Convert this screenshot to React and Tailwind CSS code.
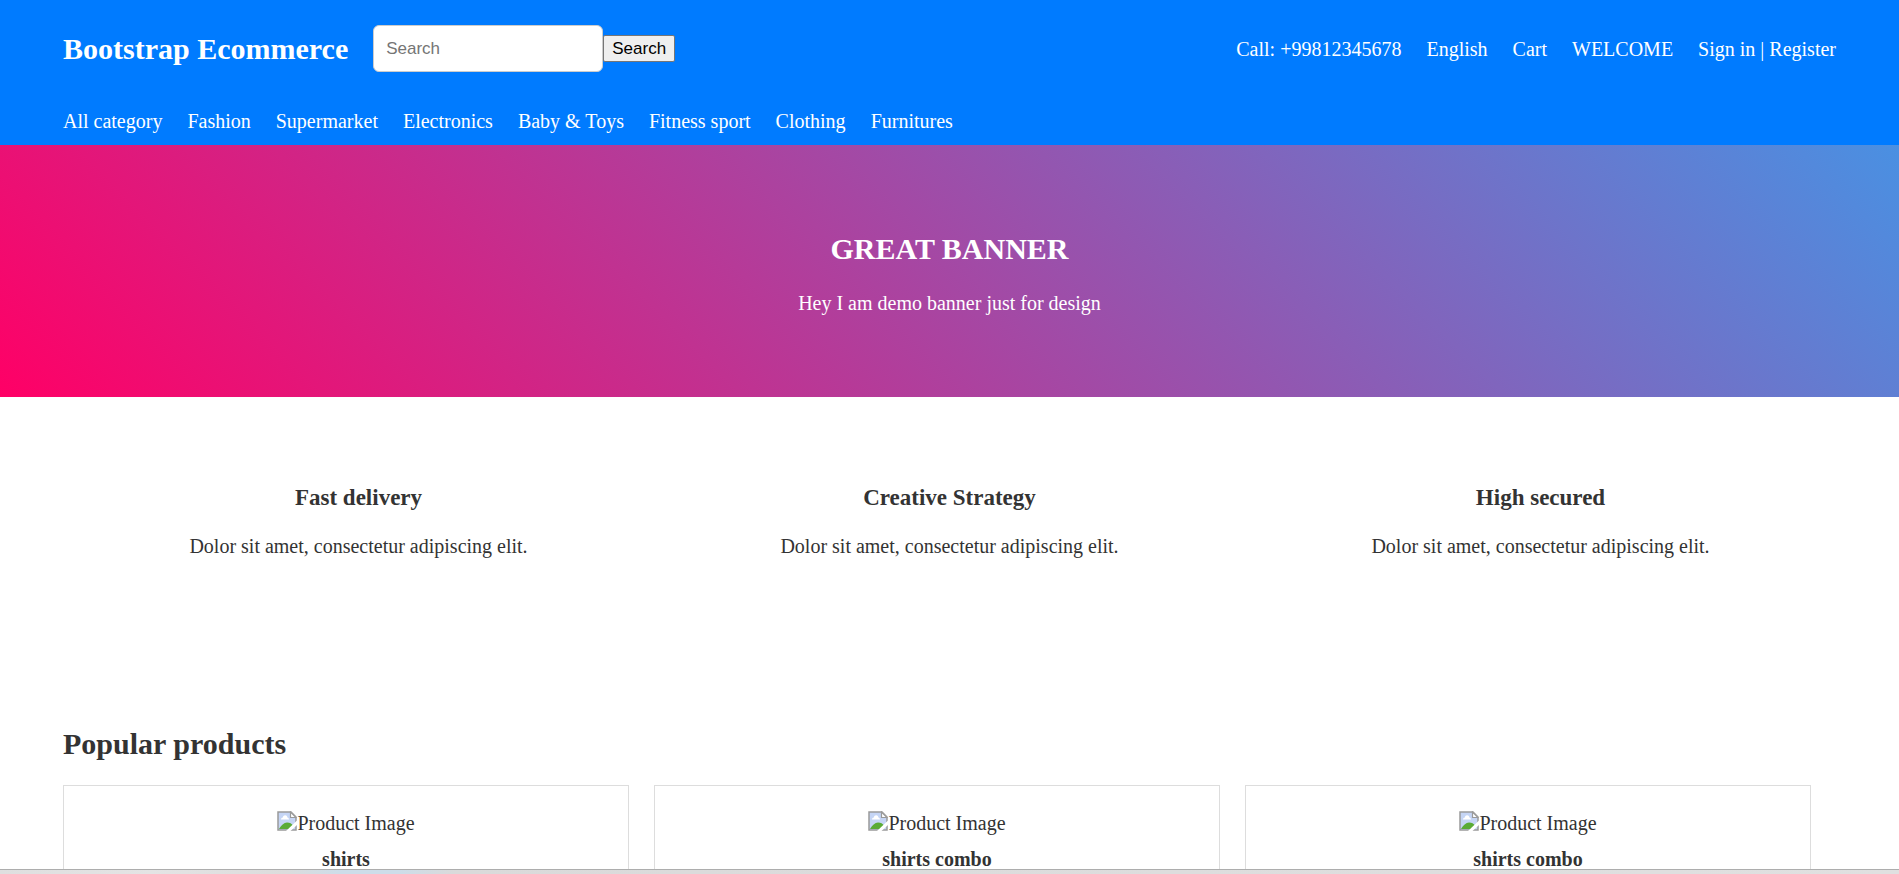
const utilityLinks = ["Call: +99812345678", "English", "Cart", "WELCOME", "Sign in | Register"];

const categories = [
  "All category",
  "Fashion",
  "Supermarket",
  "Electronics",
  "Baby & Toys",
  "Fitness sport",
  "Clothing",
  "Furnitures",
];

const features = ["Fast delivery", "Creative Strategy", "High secured"];

const products = ["shirts", "shirts combo", "shirts combo"];

function ImagePlaceholder() {
  return (
    <svg width="20" height="20" viewBox="0 0 20 20" className="shrink-0" aria-hidden="true">
      <path d="M1 1h13l5 5v13H1z" fill="#c5d5f5" />
      <path d="M4 8.500c0-1.300.9-2 1.800-2 .3-1.400 1.200-2.200 2.300-2.200 1.200 0 2.100.9 2.300 2.100.9.1 1.600.9 1.600 2.100z" fill="#fff" />
      <path d="M2 18c2-3.500 5-6.500 8-6.500s4.500 1 6 3L13 18z" fill="#5aab36" />
      <path d="M1 1h13l5 5v13H1z" fill="none" stroke="#9a9a9a" strokeWidth="1.500" />
      <path d="M13.500 1v5.500H19z" fill="#fff" stroke="#9a9a9a" strokeWidth="1.200" />
      <path d="M20 9.500v4.500L13.500 20H9z" fill="#fff" />
    </svg>
  );
}

export default function App() {
  return (
    <div className="flex h-screen flex-col overflow-hidden bg-white font-['Liberation_Serif',serif] text-xl leading-6 text-[#333]">
      <div className="min-h-0 flex-1 overflow-hidden">
        <header className="bg-[#007bff] text-white">
          <div className="flex items-center justify-between px-[63px] py-[25px]">
            <div className="flex items-center gap-[25px]">
              <a href="#" className="text-[30px] leading-[34px] font-bold">Bootstrap Ecommerce</a>
              <form className="flex items-center font-['Liberation_Sans',sans-serif] text-[17px] leading-5" onSubmit={(e) => e.preventDefault()}>
                <input
                  type="search"
                  aria-label="Search"
                  placeholder="Search"
                  className="h-[47px] w-[230px] rounded-md border border-[#ccc] bg-white px-3 text-black placeholder:text-[#757575]"
                />
                <button type="submit" className="h-[27px] w-[72px] rounded-xs border border-[#767676] bg-[#efefef] text-black">
                  Search
                </button>
              </form>
            </div>
            <nav className="flex gap-[25px]" aria-label="Account">
              {utilityLinks.map((label) => (
                <a key={label} href="#">{label}</a>
              ))}
            </nav>
          </div>
          <nav className="flex gap-[25px] px-[63px] py-3" aria-label="Categories">
            {categories.map((label) => (
              <a key={label} href="#">{label}</a>
            ))}
          </nav>
        </header>

        <section className="bg-[linear-gradient(45deg,#ff0066,#4a90e2)] px-[63px] pt-[86px] pb-[82px] text-center text-white">
          <h1 className="text-[30px] leading-[35px] font-bold">GREAT BANNER</h1>
          <p className="mt-[25px]">Hey I am demo banner just for design</p>
        </section>

        <main>
          <section className="grid grid-cols-3 px-[63px] pt-[88px] pb-[168px] text-center">
            {features.map((title) => (
              <article key={title}>
                <h2 className="text-[23px] leading-[26px] font-bold">{title}</h2>
                <p className="mt-[23px]">Dolor sit amet, consectetur adipiscing elit.</p>
              </article>
            ))}
          </section>

          <section className="pr-[88px] pl-[63px]">
            <h2 className="text-[30px] leading-[35px] font-bold">Popular products</h2>
            <div className="mt-6 grid grid-cols-3 gap-[25px]">
              {products.map((name, i) => (
                <article key={i} className="flex flex-col items-center border border-[#ddd] p-[25px] text-center">
                  <div className="flex items-start">
                    <ImagePlaceholder />
                    <span>Product Image</span>
                  </div>
                  <h3 className="mt-3 font-bold">{name}</h3>
                </article>
              ))}
            </div>
          </section>
        </main>
      </div>
      <footer className="h-[5px] shrink-0 border-t border-[#adadad] bg-[linear-gradient(90deg,#dfdfdf_0%,#e4e4e4_8%,#dcdcdc_15%,#cddde9_18%,#cddde9_21%,#dadada_24%,#e0e0e0_100%)]" />
    </div>
  );
}
